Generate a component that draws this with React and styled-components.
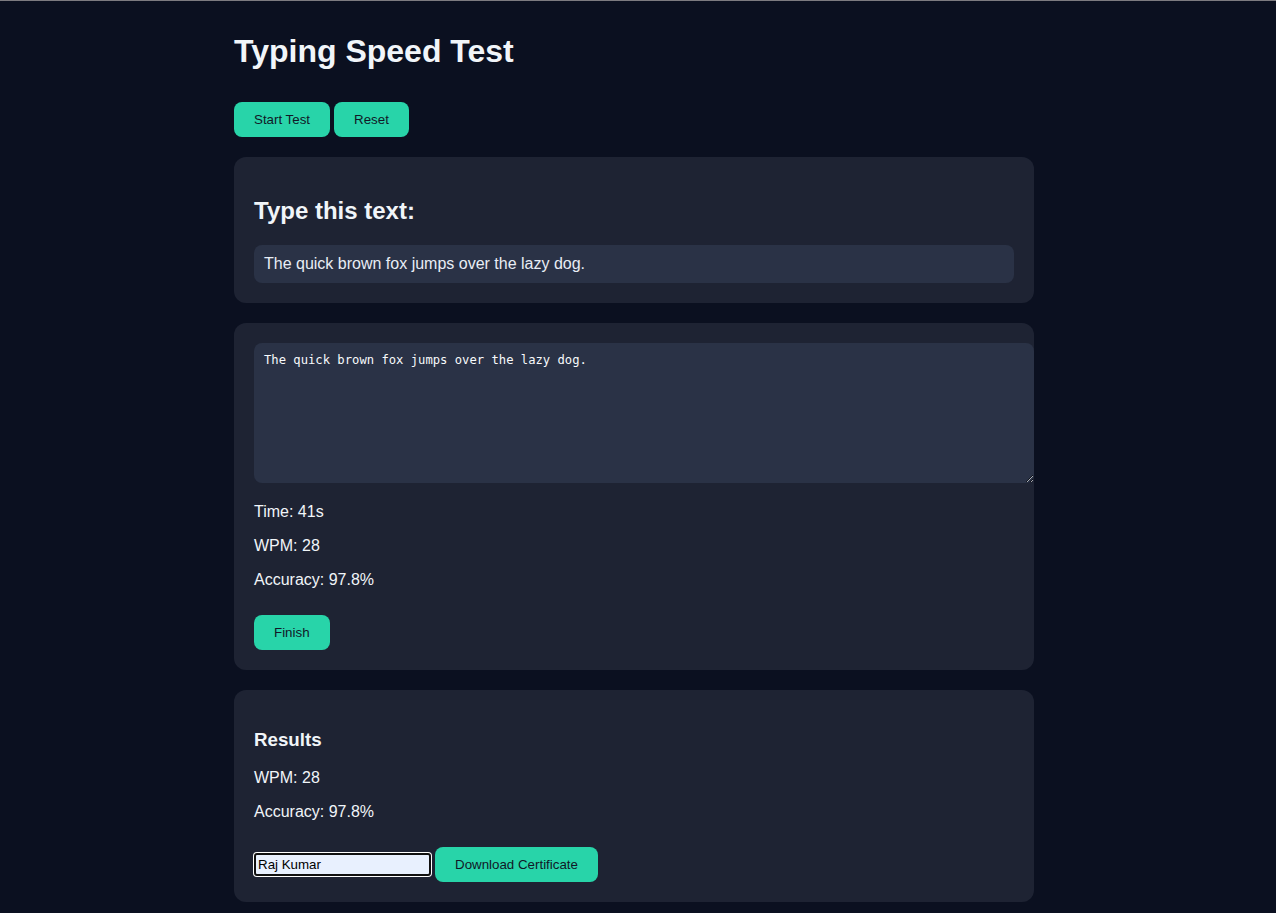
import React from "react";
import styled, { createGlobalStyle } from "styled-components";

const Global = createGlobalStyle`
  html, body {
    margin: 0;
    padding: 0;
    background: #0b1020;
    overflow: hidden;
  }
  body {
    font-family: "Liberation Sans", Arial, sans-serif;
    color: #f1f5f9;
  }
  #root {
    min-height: 100vh;
    box-sizing: border-box;
    border-top: 1px solid #7d7b80;
    border-bottom: 1px solid #6b6b70;
  }
`;

const Frame = styled.div`
  padding-right: 8px;
`;

const Container = styled.main`
  max-width: 800px;
  margin: 0 auto;
`;

const Title = styled.h1`
  font-size: 32px;
  font-weight: 700;
  margin: 32px 0 32px;
  color: #f1f5f9;
`;

const ButtonRow = styled.div`
  display: flex;
  align-items: center;
  gap: 4px;
  margin-top: ${(p) => p.$mt || 0}px;
  margin-bottom: ${(p) => p.$mb || 0}px;
`;

const Button = styled.button`
  font-family: "Liberation Sans", Arial, sans-serif;
  font-size: 13.333px;
  line-height: normal;
  padding: 10px 20px;
  border: none;
  border-radius: 8px;
  background: #28d4a9;
  color: #111827;
  cursor: pointer;
`;

const Card = styled.section`
  background: #1e2333;
  border-radius: 12px;
  padding: 20px;
  margin-bottom: 20px;
`;

const Heading = styled.h2`
  font-size: 24px;
  font-weight: 700;
  margin: 20px 0;
  color: #f1f5f9;
`;

const SubHeading = styled.h3`
  font-size: 18.72px;
  font-weight: 700;
  margin: 18.72px 0;
  color: #f1f5f9;
`;

const Passage = styled.div`
  background: #2a3246;
  border-radius: 8px;
  padding: 10px;
  font-size: 16px;
  line-height: normal;
  color: #e8edf5;
`;

const TypingArea = styled.textarea`
  display: block;
  width: 100%;
  height: 120px;
  padding: 10px;
  margin: 0 0 20px;
  border: none;
  border-radius: 8px;
  background: #2a3246;
  color: #f8fafc;
  font-family: "DejaVu Sans Mono", "Liberation Mono", monospace;
  font-size: 12.2px;
  line-height: 1.25;
  outline: none;
  box-sizing: content-box;
`;

const Stat = styled.p`
  font-size: 16px;
  line-height: normal;
  margin: 16px 0;
  color: #f1f5f9;
`;

const NameInput = styled.input`
  box-sizing: border-box;
  width: 177px;
  height: 23px;
  margin: 0;
  padding: 1px 2px;
  border: 2px solid #101010;
  border-radius: 3px;
  box-shadow: 0 0 0 1px #ffffff;
  background: #e8f0fe;
  color: #000;
  font-family: "Liberation Sans", Arial, sans-serif;
  font-size: 13.333px;
  outline: none;
`;

export default function App() {
  return (
    <>
      <Global />
      <Frame>
        <Container>
          <Title>Typing Speed Test</Title>
          <ButtonRow $mb={20}>
            <Button>Start Test</Button>
            <Button>Reset</Button>
          </ButtonRow>

          <Card>
            <Heading>Type this text:</Heading>
            <Passage>The quick brown fox jumps over the lazy dog.</Passage>
          </Card>

          <Card>
            <TypingArea
              defaultValue="The quick brown fox jumps over the lazy dog."
              spellCheck={false}
            />
            <Stat>Time: 41s</Stat>
            <Stat>WPM: 28</Stat>
            <Stat>Accuracy: 97.8%</Stat>
            <ButtonRow $mt={26}>
              <Button>Finish</Button>
            </ButtonRow>
          </Card>

          <Card>
            <SubHeading>Results</SubHeading>
            <Stat>WPM: 28</Stat>
            <Stat>Accuracy: 97.8%</Stat>
            <ButtonRow $mt={26}>
              <NameInput defaultValue="Raj Kumar" />
              <Button>Download Certificate</Button>
            </ButtonRow>
          </Card>
        </Container>
      </Frame>
    </>
  );
}
